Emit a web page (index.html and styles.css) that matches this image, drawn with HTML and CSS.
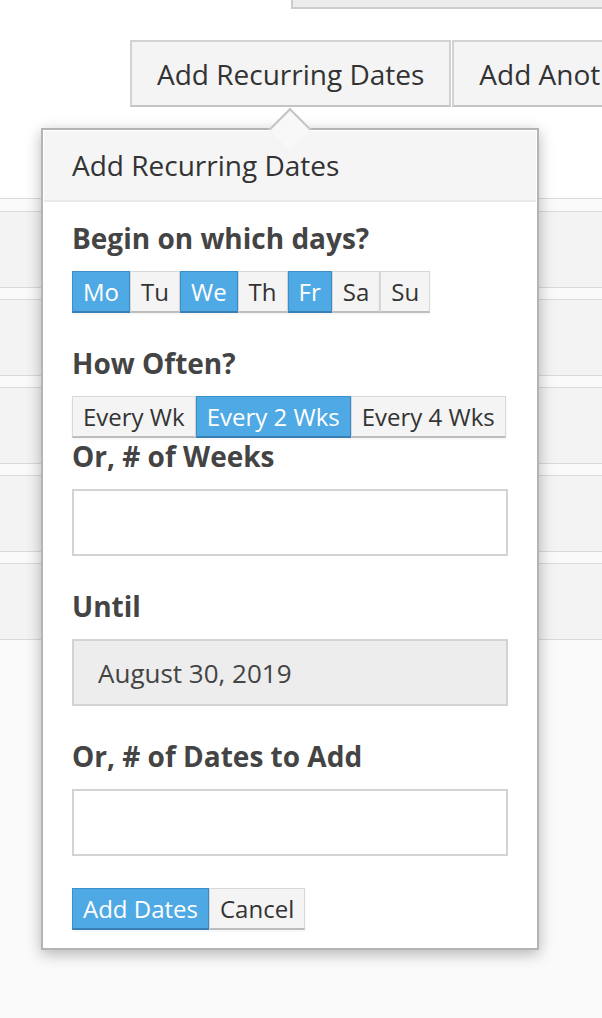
FILE: index.html
```html
<!DOCTYPE html>
<html lang="en">
<head>
    <meta charset="UTF-8">
    <meta name="viewport" content="width=device-width, initial-scale=1.0">
    <title>Add Recurring Dates</title>
    <link rel="stylesheet" href="styles.css">
</head>
<body>
    <div class="page-head">
        <div class="top-strip"></div>
        <div class="tabs">
            <button class="tab">Add Recurring Dates</button>
            <button class="tab">Add Another Date</button>
        </div>
    </div>

    <div class="rows">
        <div class="row"></div>
        <div class="row"></div>
        <div class="row"></div>
        <div class="row"></div>
        <div class="row"></div>
    </div>

    <div class="popover">
        <div class="popover-title">Add Recurring Dates</div>
        <div class="popover-body">
            <div class="field">
                <label class="field-label">Begin on which days?</label>
                <div class="btn-group">
                    <button class="btn active">Mo</button>
                    <button class="btn">Tu</button>
                    <button class="btn active">We</button>
                    <button class="btn">Th</button>
                    <button class="btn active">Fr</button>
                    <button class="btn">Sa</button>
                    <button class="btn">Su</button>
                </div>
            </div>

            <div class="field tight">
                <label class="field-label">How Often?</label>
                <div class="btn-group">
                    <button class="btn">Every Wk</button>
                    <button class="btn active">Every 2 Wks</button>
                    <button class="btn">Every 4 Wks</button>
                </div>
            </div>

            <div class="field">
                <label class="field-label" for="weeks">Or, # of Weeks</label>
                <input type="text" id="weeks" class="text-input">
            </div>

            <div class="field">
                <label class="field-label" for="until">Until</label>
                <input type="text" id="until" class="text-input readonly" value="August 30, 2019" readonly>
            </div>

            <div class="field">
                <label class="field-label" for="count">Or, # of Dates to Add</label>
                <input type="text" id="count" class="text-input">
            </div>

            <div class="btn-group">
                <button class="btn active">Add Dates</button>
                <button class="btn">Cancel</button>
            </div>
        </div>
    </div>
</body>
</html>
```

FILE: styles.css
```css
body {
    font-family: "Open Sans", Arial, sans-serif;
    background-color: #fafafa;
    margin: 0;
    padding: 0;
    min-height: 100vh;
    position: relative;
    color: #333;
}

button, input {
    font-family: inherit;
}

.page-head {
    background-color: #fff;
    height: 198px;
    overflow: hidden;
}

.top-strip {
    margin-left: 291px;
    height: 7px;
    background-color: #ececec;
    border-left: 2px solid #cdcdcd;
    border-bottom: 2px solid #cdcdcd;
}

.tabs {
    margin: 31px 0 0 130px;
    display: flex;
    gap: 1px;
    white-space: nowrap;
    overflow: hidden;
}

.tab {
    flex-shrink: 0;
    height: 67px;
    padding: 0 25px;
    font-size: 28px;
    color: #333;
    background-color: #f4f4f4;
    border: 2px solid #d2d2d2;
    border-bottom-color: #c4c4c4;
}

.rows {
    border-top: 1px solid #dadada;
    padding-top: 12px;
}

.row {
    height: 75px;
    background-color: #f3f3f3;
    border-top: 1px solid #d9d9d9;
    border-bottom: 1px solid #d9d9d9;
    margin-bottom: 11px;
}

.popover {
    position: absolute;
    top: 128px;
    left: 41px;
    width: 498px;
    box-sizing: border-box;
    background-color: #fff;
    border: 2px solid #b4b4b4;
    box-shadow: 0 4px 14px rgba(0, 0, 0, 0.28);
}

.popover::before {
    content: "";
    position: absolute;
    top: -16px;
    left: 232px;
    width: 28px;
    height: 28px;
    background-color: #f8f8f8;
    border-top: 2px solid #c4c4c4;
    border-left: 2px solid #c4c4c4;
    transform: rotate(45deg);
}

.popover-title {
    margin: 1px 1px 0;
    padding: 15px 28px 16px;
    background-color: #f5f5f5;
    border-bottom: 2px solid #e9e9e9;
    font-size: 28px;
    line-height: 38px;
    color: #333;
}

.popover-body {
    padding: 18px 29px 18px;
}

.field {
    margin-bottom: 32px;
}

.field.tight {
    margin-bottom: 0;
}

.field-label {
    display: block;
    margin: 0 0 15px;
    font-size: 28px;
    line-height: 36px;
    font-weight: bold;
    color: #444;
}

.btn-group {
    display: flex;
}

.btn {
    height: 42px;
    box-sizing: border-box;
    padding: 0 10px;
    font-size: 24px;
    line-height: 38px;
    color: #333;
    background-color: #f4f4f4;
    border: 1px solid #d8d8d8;
    border-bottom: 2px solid #bdbdbd;
    box-shadow: 0 1px 3px rgba(0, 0, 0, 0.06);
}

.btn.active {
    color: #fff;
    background-color: #4ea9e4;
    border-color: #3d8fca;
    border-bottom-color: #3a7fb4;
}

.text-input {
    display: block;
    width: 100%;
    height: 67px;
    box-sizing: border-box;
    padding: 0 24px;
    font-size: 26px;
    color: #444;
    background-color: #fff;
    border: 2px solid #d3d3d3;
    outline: none;
}

.text-input.readonly {
    background-color: #ededed;
}
```
